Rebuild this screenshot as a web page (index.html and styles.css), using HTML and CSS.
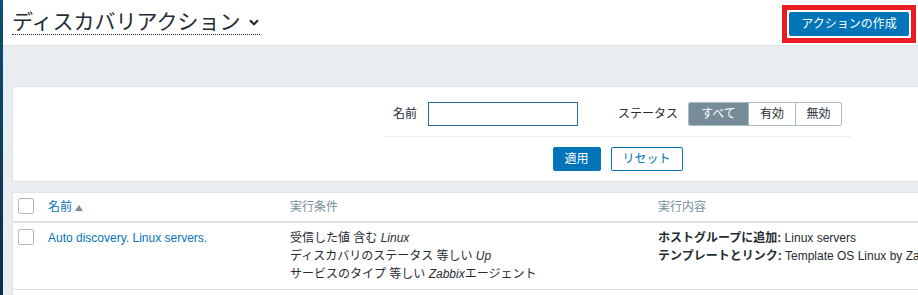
FILE: index.html
```html
<!DOCTYPE html>
<html lang="ja">
<head>
<meta charset="utf-8">
<title>ディスカバリアクション</title>
<link rel="stylesheet" href="styles.css">
</head>
<body>
<div class="layout">
  <div class="side-edge"></div>
  <main class="main">
    <header class="page-header">
      <h1 class="title"><span>ディスカバリアクション</span><svg class="chev" width="10" height="7" viewBox="0 0 10 7"><path d="M1 1.2 L5 5.2 L9 1.2" fill="none" stroke="#1f2c33" stroke-width="2.2"/></svg></h1>
      <div class="highlight"><button class="btn create">アクションの作成</button></div>
    </header>

    <section class="filter">
      <div class="filter-inner">
        <div class="filter-row">
          <label class="f-label name-label">名前</label>
          <input class="f-input" type="text">
          <label class="f-label status-label">ステータス</label>
          <div class="seg">
            <span class="seg-item on">すべて</span>
            <span class="seg-item">有効</span>
            <span class="seg-item last">無効</span>
          </div>
        </div>
        <div class="filter-actions">
          <button class="btn apply">適用</button>
          <button class="btn alt reset">リセット</button>
        </div>
      </div>
    </section>

    <section class="list">
      <div class="grid thead">
        <div class="cell cb-cell"><span class="cb"></span></div>
        <div class="cell"><a class="link">名前</a><span class="sort-up"></span></div>
        <div class="cell th">実行条件</div>
        <div class="cell th">実行内容</div>
      </div>
      <div class="grid trow">
        <div class="cell cb-cell"><span class="cb"></span></div>
        <div class="cell"><a class="link">Auto discovery. Linux servers.</a></div>
        <div class="cell">
          <div>受信した値 含む <i>Linux</i></div>
          <div>ディスカバリのステータス 等しい <i>Up</i></div>
          <div>サービスのタイプ 等しい <i>Zabbix</i>エージェント</div>
        </div>
        <div class="cell nowrap">
          <div><b>ホストグループに追加:</b> Linux servers</div>
          <div><b>テンプレートとリンク:</b> Template OS Linux by Zabbix agent</div>
        </div>
      </div>
    </section>
  </main>
</div>
</body>
</html>
```

FILE: styles.css
```css
* { box-sizing: border-box; }
html, body {
  margin: 0;
  padding: 0;
  width: 918px;
  height: 295px;
  overflow: hidden;
}
body {
  background: #ebeef0;
  color: #1f2c33;
  font-family: "Liberation Sans", Arial, "Noto Sans CJK JP", sans-serif;
  font-size: 12px;
  line-height: 18px;
}
.layout {
  display: flex;
  height: 295px;
}
.side-edge {
  width: 3px;
  flex: none;
  background: linear-gradient(#0e4d77, #0a2f4a);
}
.main {
  flex: 1;
  min-width: 0;
}
.page-header {
  height: 46px;
  background: #fff;
  border-bottom: 1px solid #dfe4e7;
  display: flex;
  justify-content: space-between;
  align-items: flex-start;
}
.title {
  margin: 10px 0 0 9px;
  display: inline-flex;
  align-items: center;
  gap: 9px;
  height: 25px;
  padding-right: 1px;
  font-size: 21px;
  line-height: 24px;
  font-weight: normal;
  color: #1f2c33;
  border-bottom: 1px dotted #1f2c33;
}
.chev { display: block; margin-top: 1px; }
.highlight {
  margin: 5px 2px 0 0;
  border: 5px solid #ec1c24;
  padding: 2px;
  background: #fff;
  display: flex;
}
.btn {
  font-family: inherit;
  font-size: 12px;
  line-height: 22px;
  height: 24px;
  padding: 0;
  border: 1px solid #0275b8;
  border-radius: 2px;
  background: #0275b8;
  color: #fff;
  cursor: pointer;
}
.create { width: 120px; }
.apply { width: 48px; }
.alt {
  background: #fff;
  color: #0275b8;
}
.reset { width: 72px; }

.filter {
  margin: 40px 0 0 9px;
  background: #fff;
  border: 1px solid #dfe4e7;
  border-right: none;
  padding: 15px 0 10px 0;
}
.filter-inner {
  margin-left: 371px;
  width: 467px;
}
.filter-row {
  display: flex;
  align-items: center;
  height: 35px;
  padding-bottom: 11px;
  border-bottom: 1px solid #ebeef0;
}
.f-label { line-height: 24px; }
.name-label { margin-left: 9px; }
.f-input {
  margin-left: 11px;
  width: 150px;
  height: 24px;
  border: 1px solid #2a6aa8;
  border-radius: 0;
  padding: 0 4px;
  font: inherit;
}
.status-label { margin-left: 40px; }
.seg {
  margin-left: 10px;
  display: flex;
  height: 24px;
  border: 1px solid #acbbc2;
  border-radius: 2px;
  overflow: hidden;
}
.seg-item {
  display: block;
  text-align: center;
  line-height: 22px;
  width: 47px;
  border-left: 1px solid #acbbc2;
  color: #1f2c33;
}
.seg-item.on {
  width: 59px;
  border-left: none;
  background: #768d99;
  color: #fff;
}
.seg-item.last { width: 46px; }
.filter-actions {
  display: flex;
  justify-content: center;
  gap: 10px;
  padding-top: 10px;
}

.list {
  margin: 10px 0 0 9px;
  background: #fff;
  border-top: 1px solid #dfe4e7;
  border-left: 1px solid #dfe4e7;
  padding-bottom: 5px;
}
.grid {
  display: grid;
  grid-template-columns: 29px 242px 368px 1fr;
}
.thead { border-bottom: 2px solid #dfe4e7; }
.thead .cell { padding: 5px 6px; }
.trow { border-bottom: 1px solid #dfe4e7; }
.trow .cell { padding: 6px 6px; }
.cell { min-width: 0; }
.cb-cell.cell { padding-left: 5px; padding-right: 0; }
.cb {
  display: block;
  width: 16px;
  height: 16px;
  border: 1px solid #acbbc2;
  border-radius: 2px;
  background: #fff;
}
.link {
  color: #0275b8;
  text-decoration: none;
}
.sort-up {
  display: inline-block;
  width: 0;
  height: 0;
  margin-left: 3px;
  border-left: 4px solid transparent;
  border-right: 4px solid transparent;
  border-bottom: 6px solid #768d99;
  vertical-align: 0px;
}
.th { color: #768d99; }
.nowrap { white-space: nowrap; overflow: hidden; }
b { font-weight: bold; }
```
